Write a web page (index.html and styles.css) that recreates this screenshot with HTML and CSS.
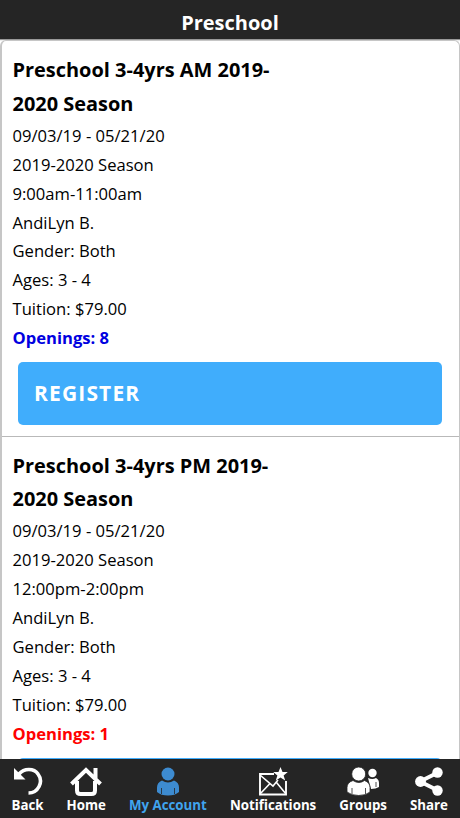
FILE: index.html
```html
<!DOCTYPE html>
<html lang="en">
<head>
<meta charset="utf-8">
<title>Preschool</title>
<link rel="stylesheet" href="styles.css">
</head>
<body>
<header class="header"><h1>Preschool</h1></header>
<main class="list">
  <article class="class-card">
    <h2>Preschool 3-4yrs AM 2019-<br>2020 Season</h2>
    <p>09/03/19 - 05/21/20</p>
    <p>2019-2020 Season</p>
    <p>9:00am-11:00am</p>
    <p>AndiLyn B.</p>
    <p>Gender: Both</p>
    <p>Ages: 3 - 4</p>
    <p>Tuition: $79.00</p>
    <p class="openings">Openings: 8</p>
    <button class="register">REGISTER</button>
  </article>
  <article class="class-card">
    <h2>Preschool 3-4yrs PM 2019-<br>2020 Season</h2>
    <p>09/03/19 - 05/21/20</p>
    <p>2019-2020 Season</p>
    <p>12:00pm-2:00pm</p>
    <p>AndiLyn B.</p>
    <p>Gender: Both</p>
    <p>Ages: 3 - 4</p>
    <p>Tuition: $79.00</p>
    <p class="openings low">Openings: 1</p>
    <div class="register"></div>
  </article>
</main>
<nav class="tabs">
  <a class="tab back"><svg viewBox="0 0 32 30"><path d="M7 7C12 1 22 1 26 7c6 8 0 19-9.500 19" fill="none" stroke="currentColor" stroke-width="3.6"/><path d="M2 1v11.500h11.500z" fill="currentColor"/></svg><span>Back</span></a>
  <a class="tab home"><svg viewBox="0 0 32 30"><path d="M1.500 17 16 3l14.500 14M25.500 12V1M7 14v9.500q0 3.500 3.500 3.500h11q3.500 0 3.500-3.500V14" fill="none" stroke="currentColor" stroke-width="4"/></svg><span>Home</span></a>
  <a class="tab account active"><svg viewBox="0 0 32 30"><circle cx="16" cy="7" r="6.500" fill="currentColor"/><path d="M10 13.500q6 4 12 0 5 2 5 7v4.500q-4 3.500-11 3.500T5 25v-4.500q0-5 5-7z" fill="currentColor"/><path d="M9.500 21v6M22.500 21v6" stroke="#252525" stroke-width=".8"/></svg><span>My Account</span></a>
  <a class="tab notifications"><svg viewBox="0 0 32 30"><path d="M17 7H3v20.500h26V14" fill="none" stroke="currentColor" stroke-width="1.900"/><path d="m3 8 13 11 5-6M3 27l10-10.500M29 27 19.500 15.500" fill="none" stroke="currentColor" stroke-width="1.600"/><path d="m23.500 0 2 5h5.300l-4.200 3.500 1.600 5-4.700-3-4.700 3 1.600-5L16.200 5h5.300z" fill="currentColor"/></svg><span>Notifications</span></a>
  <a class="tab groups"><svg viewBox="0 0 32 30"><circle cx="25.500" cy="6" r="4.200" fill="currentColor"/><path d="M21 11q4.500 2 8 0 3 1.500 3 5v4q-3 2-8 2z" fill="currentColor"/><g stroke="#252525" stroke-width=".8"><circle cx="11.700" cy="7" r="7" fill="currentColor"/><path d="M6 13.500q6 4 11.500 0 5.500 2 5.500 7v4.500q-4 3.500-11.300 3.500T0 25v-4.500q0-5 6-7z" fill="currentColor"/><path d="M5 21v6M18.500 21v6M29 15v5" fill="none"/></g></svg><span>Groups</span></a>
  <a class="tab share"><svg viewBox="0 0 32 30"><path d="M25 5.500 7 14.500l18 9" fill="none" stroke="currentColor" stroke-width="3.900"/><g fill="currentColor"><circle cx="24.500" cy="5.500" r="5.200"/><circle cx="7.500" cy="14.500" r="5.400"/><circle cx="24.500" cy="23.500" r="5.200"/></g></svg><span>Share</span></a>
</nav>
</body>
</html>
```
FILE: styles.css
```css
* { box-sizing: border-box; }
html, body { height: 100%; margin: 0; }
body {
  display: flex;
  flex-direction: column;
  overflow: hidden;
  background: #fff;
  color: #000;
  font-family: "Open Sans", sans-serif;
}
.header {
  flex: 0 0 39px;
  padding-top: 7px;
  background: #252525;
  box-shadow: 0 1px 1px #999;
}
h1 {
  margin: 0;
  color: #fff;
  font-size: 20px;
  line-height: 32px;
  text-align: center;
}
.list {
  flex: 1 1 0;
  min-height: 0;
  margin-top: 1px;
  overflow: hidden;
  border: solid #c6c6c6;
  border-width: 1px 1px 0 2px;
  border-radius: 6px 6px 0 0;
}
.class-card {
  height: 395.500px;
  padding: 12px 17px 0 10.500px;
  border-bottom: 1px solid #b9b9b9;
}
h2 {
  margin: 0 0 1.800px;
  font-size: 19.950px;
  line-height: 33.500px;
}
p {
  margin: 0;
  font-size: 16.600px;
  line-height: 28.900px;
}
.openings { color: #0000e0; font-weight: 700; }
.low { color: #f00; }
.register {
  display: block;
  width: calc(100% - 5.500px);
  height: 63px;
  margin: 9px 0 0 5.500px;
  padding: 0 16px 1px;
  border: 0;
  border-radius: 5px;
  background: #40adfc;
  color: #fff;
  font: 700 21px "Open Sans", sans-serif;
  letter-spacing: 1.150px;
  text-align: left;
}
.tabs {
  flex: 0 0 59px;
  display: flex;
  justify-content: space-between;
  padding: 8px 12px 0 11.500px;
  background: #252525;
}
.tab {
  display: flex;
  flex-direction: column;
  align-items: center;
  color: #fff;
  font-size: 13.300px;
  font-weight: 700;
  line-height: 16px;
}
.tab svg { width: 32px; height: 30px; }
.active { color: #40a4ee; }
.active svg { color: #3d8bd0; }
```
